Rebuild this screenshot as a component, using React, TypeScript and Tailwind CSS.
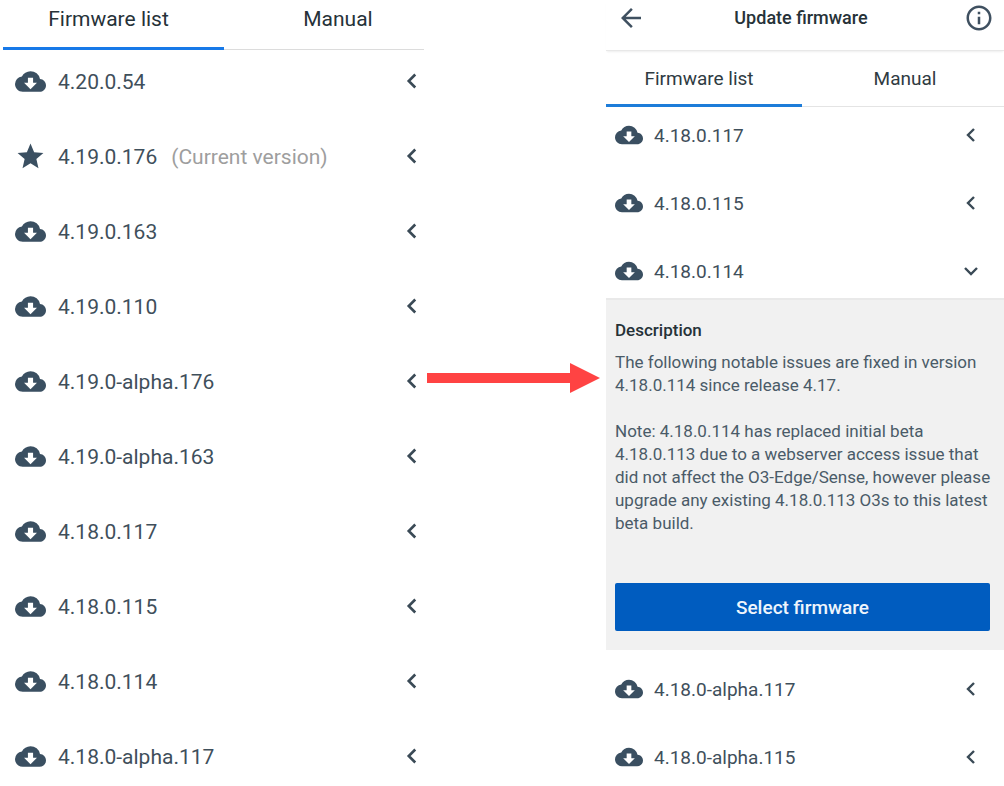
import { useState } from 'react';
import { clsx } from 'clsx';
import { MdArrowBack, MdCloudDownload, MdInfoOutline, MdStar } from 'react-icons/md';

interface Firmware {
    version: string;
    current?: boolean;
}

const allFirmware: Firmware[] = [
    { version: '4.20.0.54' },
    { version: '4.19.0.176', current: true },
    { version: '4.19.0.163' },
    { version: '4.19.0.110' },
    { version: '4.19.0-alpha.176' },
    { version: '4.19.0-alpha.163' },
    { version: '4.18.0.117' },
    { version: '4.18.0.115' },
    { version: '4.18.0.114' },
    { version: '4.18.0-alpha.117' },
];

const newerFirmware: Firmware[] = [
    { version: '4.18.0.117' },
    { version: '4.18.0.115' },
    { version: '4.18.0.114' },
];

const olderFirmware: Firmware[] = [
    { version: '4.18.0-alpha.117' },
    { version: '4.18.0-alpha.115' },
];

function Chevron({ open, className }: { open?: boolean; className?: string }) {
    return (
        <svg viewBox="0 0 24 24" fill="none" stroke="currentColor" strokeWidth="2.4" className={className} aria-hidden="true">
            <path d={open ? 'M6 9l6 6 6-6' : 'M15 6l-6 6 6 6'} />
        </svg>
    );
}

function FirmwareRow({ firmware, large, open, onClick }: {
    firmware: Firmware;
    large?: boolean;
    open?: boolean;
    onClick?: () => void;
}) {
    const Icon = firmware.current ? MdStar : MdCloudDownload;

    return (
        <li>
            <button
                type="button"
                aria-expanded={!!open}
                onClick={onClick}
                className={clsx(
                    'flex w-full items-center text-left text-[#3f4f5b] cursor-pointer',
                    large ? 'h-[30px] pl-[15px] pr-px text-[21px]' : 'h-7 pl-[9px] pr-[21px] text-[19px]'
                )}
            >
                <span className={clsx('flex shrink-0 justify-center text-[#3a4f61]', large ? 'w-[31px]' : 'w-7')}>
                    <Icon className={large ? 'size-[31px]' : 'size-7'} />
                </span>
                <span className={large ? 'ml-3 pt-1' : 'ml-[11px] pt-0.5'}>{firmware.version}</span>
                {firmware.current && <span className="ml-[14px] pt-1 text-[#9e9e9e]">(Current version)</span>}
                <Chevron
                    open={open}
                    className={clsx('ml-auto shrink-0 text-[#3a4a56]', large ? 'size-[26px]' : 'size-6')}
                />
            </button>
        </li>
    );
}

function AllFirmwarePanel() {
    return (
        <section>
            <div role="tablist" className="mr-[2px] ml-[3px] grid h-[49px] grid-cols-[221fr_200fr] text-[21px] text-[#263238]">
                <button type="button" role="tab" aria-selected="true" className="border-b-3 border-[#1779e8] pr-2.5 pb-2">
                    Firmware list
                </button>
                <button type="button" role="tab" aria-selected="false" className="h-[50px] border-b border-[#dcdcdc] pb-2.5 pl-7">
                    Manual
                </button>
            </div>
            <ul className="flex flex-col gap-[45px] pt-[17px]">
                {allFirmware.map((firmware) => (
                    <FirmwareRow key={firmware.version} firmware={firmware} large />
                ))}
            </ul>
        </section>
    );
}

function UpdateFirmwarePanel() {
    const [open, setOpen] = useState(true);

    return (
        <section>
            <header className="flex h-[51px] items-center border-b border-[#e8e8e8] px-[10px] pb-[14px] shadow-[0_2px_2px_-1px_#eeeeee]">
                <button type="button" aria-label="Back" className="text-[#3f5060]">
                    <MdArrowBack className="size-[30px]" />
                </button>
                <h1 className="flex-1 pr-2 text-center text-lg font-medium text-[#263238]">Update firmware</h1>
                <button type="button" aria-label="Information" className="text-[#3f5060]">
                    <MdInfoOutline className="size-[30px]" />
                </button>
            </header>
            <div role="tablist" className="grid h-14 grid-cols-[196fr_202fr] text-[19px] text-[#2f3b42]">
                <button type="button" role="tab" aria-selected="true" className="border-b-3 border-[#1d7cd9] pt-1 pr-2.5">
                    Firmware list
                </button>
                <button type="button" role="tab" aria-selected="false" className="border-b border-[#e4e4e4] pt-0.5 pl-1">
                    Manual
                </button>
            </div>
            <ul className="flex flex-col gap-10 pt-[14px] pb-[13px]">
                {newerFirmware.map((firmware) => (
                    <FirmwareRow
                        key={firmware.version}
                        firmware={firmware}
                        open={open && firmware.version === '4.18.0.114'}
                        onClick={() => firmware.version === '4.18.0.114' && setOpen(!open)}
                    />
                ))}
            </ul>
            {open && (
                <div className="border-t-2 border-[#e9e9e9] bg-[#f1f1f1] pt-[18px] pr-[14px] pb-[19px] pl-[9px]">
                    <h2 className="text-[17px] leading-6 font-medium text-[#263238]">Description</h2>
                    <div className="-mr-3 mt-[9px] flex flex-col gap-[23px] text-[17px] leading-[23px] text-[#4a5b68]">
                        <p>The following notable issues are fixed in version 4.18.0.114 since release 4.17.</p>
                        <p>
                            Note: 4.18.0.114 has replaced initial beta 4.18.0.113 due to a webserver access issue that
                            did not affect the O3-Edge/Sense, however please upgrade any existing 4.18.0.113 O3s to
                            this latest beta build.
                        </p>
                    </div>
                    <button type="button" className="mt-12 h-12 w-full rounded-xs bg-[#005cbf] pt-0.5 text-[19px] font-medium text-[#eef5fc]">
                        Select firmware
                    </button>
                </div>
            )}
            <ul className="flex flex-col gap-10 pt-[25px]">
                {olderFirmware.map((firmware) => (
                    <FirmwareRow key={firmware.version} firmware={firmware} />
                ))}
            </ul>
        </section>
    );
}

export default function App() {
    return (
        <main className="grid grid-cols-[426fr_180fr_398fr] bg-white font-['Roboto',sans-serif]">
            <AllFirmwarePanel />
            <div className="flex h-[30px] items-center mt-[363px] pr-1.5 pl-px" aria-hidden="true">
                <div className="h-2.5 flex-1 bg-[#ff4343]" />
                <svg viewBox="0 0 30 30" className="size-[30px] fill-[#ff4343]">
                    <path d="M0 0L30 15L0 30Z" />
                </svg>
            </div>
            <UpdateFirmwarePanel />
        </main>
    );
}
